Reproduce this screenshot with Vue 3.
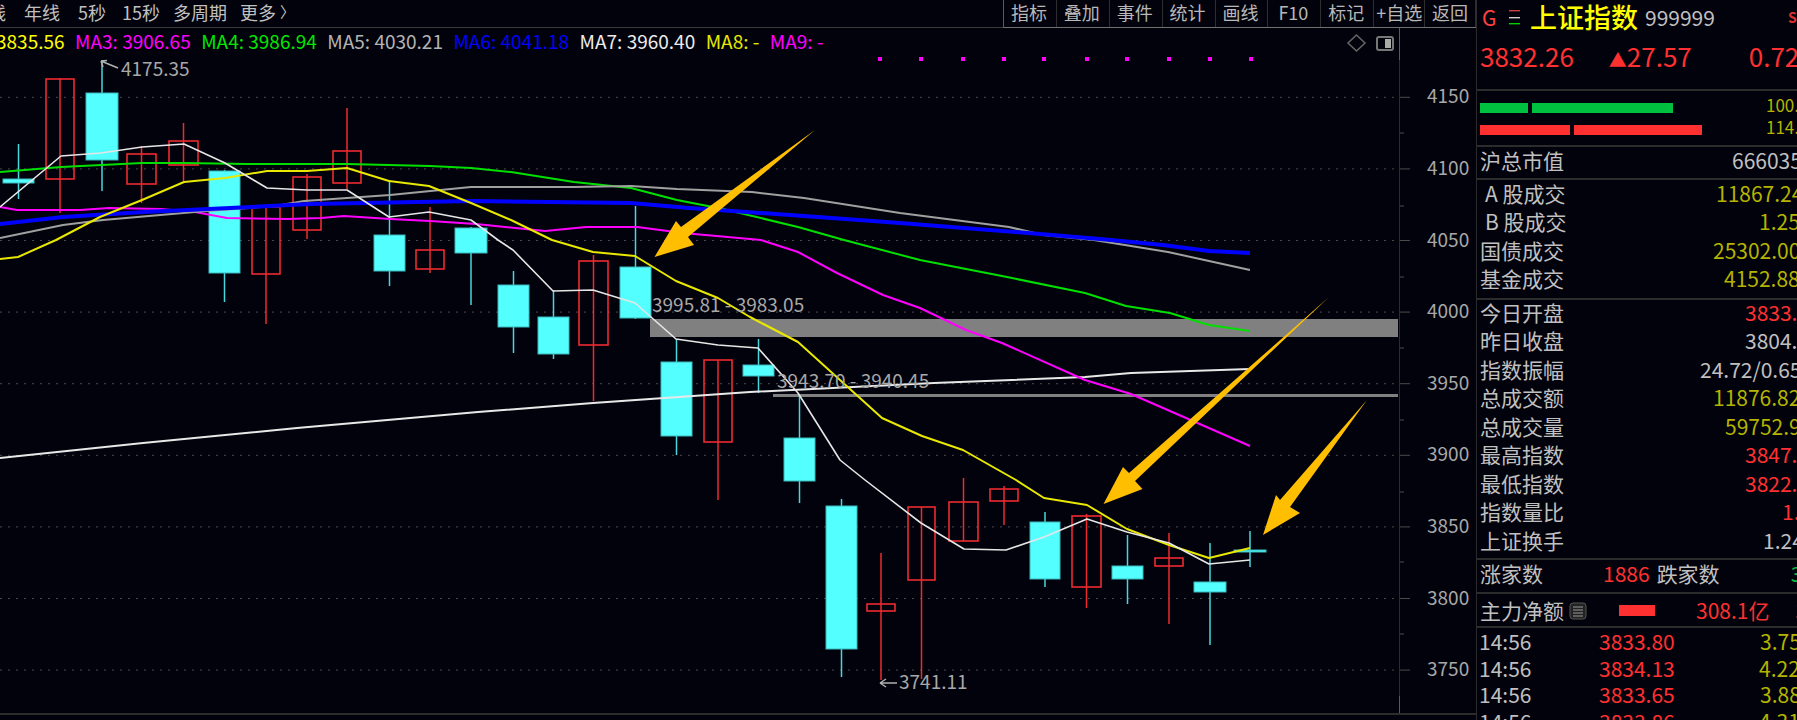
<script setup>
const tabs = [
  { t: '线', c: 'first' }, { t: '年线' }, { t: '5秒', c: 'g5' }, { t: '15秒', c: 'g7' },
  { t: '多周期' }, { t: '更多' }, { t: '〉', c: 'chev' }
]
const tools = ['指标', '叠加', '事件', '统计', '画线', 'F10', '标记', '+自选', '返回']
const legend = [
  { t: '3835.56', c: '#ffff00' }, { t: 'MA3: 3906.65', c: '#ff00ff' }, { t: 'MA4: 3986.94', c: '#00e800' },
  { t: 'MA5: 4030.21', c: '#b4b4b4' }, { t: 'MA6: 4041.18', c: '#0000ff' }, { t: 'MA7: 3960.40', c: '#ececec' },
  { t: 'MA8: -', c: '#e8e800' }, { t: 'MA9: -', c: '#ff00ff' }
]
const status = [
  { t: '58500031.00', c: '#e8e800' }, { t: 'MAVOL1: 21475300.00', c: '#e000e0' }, { t: 'MAVOL2: 32037511.00', c: '#00e000' },
  { t: '换 0.00', c: '#b4b4b4' }, { t: '涨 0.00', c: '#0000ff' }, { t: '补量比 0.00', c: '#a000a0' },
  { t: '补量比 0.00', c: '#a8a800' }, { t: '出仓比 0.00', c: '#e02020' }, { t: '补出量 0.00', c: '#0000e0' }
]

const gridY = [97.3, 168.9, 240.5, 312.1, 383.7, 455.3, 526.9, 598.5, 670.1]
const axis = [4150, 4100, 4050, 4000, 3950, 3900, 3850, 3800, 3750]
const minorY = [133, 206, 277, 348, 420, 492, 562, 634]
const dots = [880, 921, 963, 1004, 1044, 1087, 1127, 1169, 1210, 1251]

const candles = [
  [3, 34, 179, 183, 144, 199, 'c'], [45, 75, 79, 179, 78, 213, 'r'], [86, 118, 93, 160, 60, 191, 'c'],
  [126, 157, 154, 184, 146, 203, 'r'], [168, 199, 141, 165, 123, 181, 'r'], [209, 240, 171, 273, 170, 302, 'c'],
  [251, 281, 207, 274, 206, 324, 'r'], [292, 322, 177, 230, 174, 239, 'r'], [332, 362, 151, 183, 108, 189, 'r'],
  [374, 405, 235, 271, 180, 286, 'c'], [415, 445, 250, 269, 207, 273, 'r'], [455, 487, 228, 253, 227, 305, 'c'],
  [498, 529, 285, 327, 271, 353, 'c'], [538, 569, 317, 354, 290, 359, 'c'], [578, 609, 261, 345, 255, 401, 'r'],
  [620, 651, 267, 318, 206, 319, 'c'], [661, 692, 362, 436, 339, 455, 'c'], [703, 733, 360, 442, 360, 500, 'r'],
  [743, 774, 365, 376, 339, 393, 'c'], [784, 815, 438, 481, 395, 503, 'c'], [826, 857, 506, 649, 499, 677, 'c'],
  [866, 896, 604, 611, 553, 680, 'r'], [907, 936, 507, 580, 507, 679, 'r'], [948, 979, 502, 541, 478, 541, 'r'],
  [989, 1019, 489, 501, 486, 525, 'r'], [1030, 1060, 522, 579, 512, 587, 'c'], [1071, 1102, 516, 587, 514, 608, 'r'],
  [1112, 1143, 566, 579, 535, 604, 'c'], [1154, 1184, 558, 566, 533, 624, 'r'], [1194, 1226, 582, 592, 543, 645, 'c'],
  [1234, 1266, 550, 552, 531, 567, 'c']
].map(([a, b, t, bo, wt, wb, k]) => ({ a, b, t, bo, wt, wb, k, m: (a + b) / 2 }))

const lines = [
  { c: '#e8e8e8', w: 2, p: '0,458 143,443 297,428 478,412 593,403 750,392 934,383 1085,377 1131,373 1250,369' },
  { c: '#ff00ff', w: 2, p: '0,207 17,210 80,210 109,208 161,209 195,212 227,218 287,219 321,218 344,216 390,219 430,221 476,224 545,231 586,227 637,227 683,233 761,240 798,252 837,273 883,295 920,308 966,330 1002,343 1085,380 1131,394 1186,418 1250,446' },
  { c: '#00e000', w: 2, p: '0,172 61,167 142,163 184,163 247,164 347,164 430,166 471,168 511,172 574,182 631,188 677,200 723,209 798,227 844,240 920,260 966,269 1002,276 1085,293 1126,306 1170,313 1209,325 1250,331' },
  { c: '#a0a0a0', w: 2, p: '0,238 63,225 103,220 195,212 275,206 304,201 390,195 471,187 574,187 631,186 677,189 752,192 804,198 900,213 1009,227 1043,235 1094,240 1168,252 1250,270' },
  { c: '#0000ff', w: 4, p: '0,224 63,217 144,212 230,208 310,204 471,201 631,203 689,208 804,216 900,223 1015,232 1100,239 1163,245 1209,251 1250,253' },
  { c: '#e8e800', w: 2, p: '0,259 18,257 56,240 100,217 142,200 184,182 225,178 267,171 307,171 347,168 389,181 429,186 471,203 511,220 552,240 593,252 635,256 676,281 718,298 750,317 798,342 840,380 882,418 922,436 963,450 1016,480 1044,498 1087,505 1127,529 1169,545 1209,558 1250,548' },
  { c: '#e6e6e6', w: 1.6, p: '0,207 61,156 101,153 142,147 184,144 225,163 267,188 307,190 347,190 389,217 429,212 471,220 498,240 513,250 553,291 593,290 635,303 676,339 718,345 758,348 798,393 840,460 865,480 921,523 964,549 1006,550 1044,537 1087,519 1127,532 1169,543 1209,564 1250,560' }
]
const arrows = [
  '815,130 688,237 694,245 654.5,257 676,221 681,227',
  '1329,297 1135,481 1142.5,489 1103.5,504 1123,467 1129,473',
  '1367,400 1290,507 1300,513 1263,535 1276,495 1280,500'
]

const O = '#b4b400', G = '#c0c0c0', R = '#ff3030'
const sec1 = [
  { l: 'A 股成交', v: '11867.24亿', x: 1716, c: O, i: true }, { l: 'B 股成交', v: '1.25亿', x: 1759, c: O, i: true },
  { l: '国债成交', v: '25302.00亿', x: 1713, c: O }, { l: '基金成交', v: '4152.88亿', x: 1724, c: O }
]
const sec2 = [
  { l: '今日开盘', v: '3833.71', x: 1745, c: R }, { l: '昨日收盘', v: '3804.69', x: 1745, c: G },
  { l: '指数振幅', v: '24.72/0.65%', x: 1700, c: G }, { l: '总成交额', v: '11876.82亿', x: 1713, c: O },
  { l: '总成交量', v: '59752.9万', x: 1725, c: O }, { l: '最高指数', v: '3847.01', x: 1745, c: R },
  { l: '最低指数', v: '3822.29', x: 1745, c: R }, { l: '指数量比', v: '1.02', x: 1782, c: R },
  { l: '上证换手', v: '1.24%', x: 1763, c: G }
]
const ticks = [
  { p: '3833.80', v: '3.75亿', x: 1761 }, { p: '3834.13', v: '4.22亿', x: 1760 },
  { p: '3833.65', v: '3.88亿', x: 1761 }, { p: '3833.86', v: '4.31亿', x: 1760 }
]
const off = (x) => ({ marginLeft: x - 1570 + 'px' })
</script>

<template>
  <div class="app">
    <div class="main">
      <header class="topbar">
        <nav class="tabs">
          <span v-for="t in tabs" :key="t.t" :class="t.c">{{ t.t }}</span>
        </nav>
        <div class="tools">
          <span v-for="t in tools" :key="t">{{ t }}</span>
        </div>
      </header>

      <section class="chart">
        <div class="legend">
          <span v-for="l in legend" :key="l.t" :style="{ color: l.c }">{{ l.t }}</span>
        </div>
        <svg class="plot" width="1476" height="685" viewBox="0 28 1476 685">
          <line v-for="y in gridY" :key="y" class="grid" x1="0" x2="1398" :y1="y" :y2="y" />
          <line x1="1399.5" x2="1399.5" y1="60" y2="696" class="axis" />
          <line x1="1399.5" x2="1399.5" y1="28" y2="60" class="axis-hi" />
          <line x1="1399.5" x2="1399.5" y1="696" y2="713" class="axis-hi" />
          <line v-for="y in gridY" :key="'m' + y" class="tick" x1="1400" x2="1410" :y1="y" :y2="y" />
          <line v-for="y in minorY" :key="'n' + y" class="tick" x1="1400" x2="1404" :y1="y" :y2="y" />
          <text v-for="(a, i) in axis" :key="a" class="ax-label" x="1427" :y="gridY[i] + 6">{{ a }}</text>

          <rect x="650" y="319" width="748" height="18" class="band" />
          <rect x="773" y="394" width="625" height="3" class="band" />

          <g v-for="c in candles" :key="c.a">
            <line :x1="c.m" :x2="c.m" :y1="c.wt" :y2="c.wb" :class="c.k === 'c' ? 'wick-c' : 'wick-r'" />
            <rect v-if="c.k === 'c'" :x="c.a" :y="c.t" :width="c.b - c.a" :height="c.bo - c.t" class="body-c" />
            <rect v-else :x="c.a + 1" :y="c.t" :width="c.b - c.a - 2" :height="c.bo - c.t" class="body-r" />
          </g>

          <polyline v-for="l in lines" :key="l.c + l.w" :points="l.p" :stroke="l.c" :stroke-width="l.w" class="ma" />

          <rect v-for="x in dots" :key="x" :x="x - 2" y="57" width="4" height="4" class="dot" />

          <text class="label" x="652" y="312">3995.81 - 3983.05</text>
          <text class="label" x="777" y="388">3943.70 - 3940.45</text>
          <text class="label" x="121" y="76">4175.35</text>
          <text class="label" x="899" y="689">3741.11</text>
          <path d="M118 68 L101 61 M101 61 L107 60.5 M101 61 L103 67" class="pointer" />
          <path d="M897 683 L880 683 M880 683 L886 679 M880 683 L886 687" class="pointer" />

          <polygon v-for="a in arrows" :key="a" :points="a" class="arrow" />

          <polygon points="1356.5,35 1365,43 1356.5,51 1348,43" class="diamond" />
          <rect x="1377" y="37" width="16" height="13" rx="2" class="frame" />
          <rect x="1385" y="39" width="6" height="9" class="frame-in" />
        </svg>
      </section>

      <footer class="status">
        <span v-for="s in status" :key="s.t + s.c" :style="{ color: s.c }">{{ s.t }}</span>
      </footer>
    </div>

    <aside class="panel">
      <div class="title">
        <span class="g">G</span>
        <svg class="menu" width="12" height="16" viewBox="0 0 12 16">
          <rect y="0" width="11" height="1.4" fill="#c84040" />
          <rect y="7" width="11" height="1.4" fill="#d0d0d0" />
          <rect y="13" width="11" height="1.4" fill="#00d000" />
        </svg>
        <span class="name">上证指数</span>
        <span class="code">999999</span>
        <span class="so">S0</span>
      </div>
      <div class="quote">
        <span class="price">3832.26</span>
        <span class="chg"><i class="up">▲</i>27.57</span>
        <span class="pct">0.72%</span>
      </div>

      <div class="bars sep">
        <div class="bar-row">
          <div class="track"><b class="gr" style="width:48px"></b><b class="gr" style="width:141px"></b></div>
          <span class="olive small">100.21亿</span>
        </div>
        <div class="bar-row">
          <div class="track"><b class="rd" style="width:90px"></b><b class="rd" style="width:128px"></b></div>
          <span class="olive small">114.55亿</span>
        </div>
      </div>

      <div class="row cap sep">
        <span class="lbl">沪总市值</span>
        <span :style="off(1732)">666035.12亿</span>
      </div>

      <div class="list sep">
        <div v-for="r in sec1" :key="r.l" class="row">
          <span class="lbl" :class="{ ind: r.i }">{{ r.l }}</span>
          <span :style="{ ...off(r.x), color: r.c }">{{ r.v }}</span>
        </div>
      </div>

      <div class="list second sep">
        <div v-for="r in sec2" :key="r.l" class="row">
          <span class="lbl">{{ r.l }}</span>
          <span :style="{ ...off(r.x), color: r.c }">{{ r.v }}</span>
        </div>
      </div>

      <div class="row single sep">
        <span class="lbl three">涨家数</span>
        <span class="red n1886">1886</span>
        <span class="lbl three fall">跌家数</span>
        <span class="green">316</span>
      </div>

      <div class="row single flow sep">
        <span class="lbl">主力净额</span>
        <svg class="list-icon" width="18" height="18" viewBox="0 0 18 18">
          <rect x="1" y="1" width="16" height="16" rx="3" fill="#222" stroke="#555" />
          <path d="M4 5h10M4 8h10M4 11h10M4 14h10" stroke="#999" stroke-width="1" />
        </svg>
        <b class="flow-bar"></b>
        <span class="red net">308.1亿</span>
        <span class="red">308</span>
      </div>

      <div class="tick-list">
        <div v-for="t in ticks" :key="t.p" class="tick-row">
          <span class="tm">14:56</span>
          <span class="red tp">{{ t.p }}</span>
          <span class="olive" :style="{ marginLeft: t.x - 1660 + 'px' }">{{ t.v }}</span>
        </div>
      </div>
    </aside>
  </div>
</template>

<style>
html, body { margin: 0; background: #02020c; }
</style>

<style scoped>
.app {
  display: flex;
  width: 1797px;
  height: 720px;
  overflow: hidden;
  background: #02020c;
  color: #c0c0c0;
  font-family: "Noto Sans CJK SC", "Noto Sans", sans-serif;
}
.main { width: 1476px; flex: none; display: flex; flex-direction: column; }

.topbar {
  height: 27px;
  flex: none;
  display: flex;
  justify-content: space-between;
  border-bottom: 1px solid #3a3a3a;
  font-size: 18px;
  line-height: 24px;
  position: relative;
}
.tabs { display: flex; gap: 13px; margin-left: -12px; white-space: nowrap; }
.tabs .first { margin-right: 5px; }
.tabs .g5 { margin-left: 5px; }
.tabs .g7 { margin-left: 3px; }
.tabs .chev { margin-left: -9px; font-size: 15px; }
.tools { display: flex; width: 473px; border-left: 1px solid #5a5a5a; margin-bottom: -1px; border-bottom: 1px solid #707070; box-sizing: border-box; height: 28px; }
.tools span {
  flex: 1 1 0;
  text-align: center;
  border-right: 1px solid #2e2e2e;
  white-space: nowrap;
  color: #b8b8b8;
}
.tools span:nth-child(-n+7) { padding-right: 2px; }
.chart { position: relative; height: 685px; flex: none; }
.legend {
  position: absolute;
  left: -4px;
  top: 0;
  display: flex;
  gap: 10.5px;
  font-size: 19px;
  line-height: 26px;
  white-space: nowrap;
}
.plot { display: block; }
.grid { stroke: #4a4a4a; stroke-width: 1; stroke-dasharray: 2 6; }
.axis { stroke: #2c2c2c; stroke-width: 1; }
.axis-hi { stroke: #5a5a5a; stroke-width: 1; }
.tick { stroke: #4a4a4a; stroke-width: 1; }
.ax-label { fill: #a8a8a8; font-size: 19px; }
.band { fill: #808080; }
.wick-c { stroke: #48d8dc; stroke-width: 1.5; }
.wick-r { stroke: #ee2a2e; stroke-width: 1.5; }
.body-c { fill: #54ffff; stroke: #3ab8bc; stroke-width: 1; }
.body-r { fill: none; stroke: #ee2a30; stroke-width: 1.6; }
.ma { fill: none; stroke-linejoin: round; }
.dot { fill: #ff00ff; }
.label { fill: #a8a8a8; font-size: 19px; }
.pointer { fill: none; stroke: #b0b0b0; stroke-width: 1.5; }
.arrow { fill: #ffbe00; }
.diamond { fill: none; stroke: #666; stroke-width: 1.5; }
.frame { fill: none; stroke: #777; stroke-width: 2; }
.frame-in { fill: #aaa; }

.status {
  flex: none;
  border-top: 2px solid #2c2c2c;
  display: flex;
  gap: 10px;
  margin-left: -2px;
  font-size: 18px;
  line-height: 26px;
  white-space: nowrap;
}

.panel {
  flex: 1;
  border-left: 1px solid #2c2c2c;
  font-size: 21px;
  line-height: 28px;
  white-space: nowrap;
  overflow: hidden;
  min-width: 0;
}
.title { height: 34px; display: flex; align-items: center; position: relative; padding-left: 5px; }
.g { color: #ff4040; width: 27px; flex: none; line-height: 30px; }
.menu { flex: none; margin-top: 2px; }
.name { color: #ffff00; font-size: 27px; font-weight: 500; margin-left: 9px; line-height: 32px; }
.code { margin-left: 7px; color: #c0c0c0; line-height: 30px; }
.so { position: absolute; left: 311px; top: 8px; color: #e03030; font-size: 14px; font-weight: 700; line-height: 18px; }
.quote { height: 55px; display: flex; align-items: flex-start; color: #ff3030; font-size: 26px; line-height: 44px; padding-left: 3px; }
.chg { margin-left: 35px; }
.up { font-style: normal; font-size: 18px; }
.pct { margin-left: 57px; }
.sep { border-bottom: 2px solid #2c2c2c; }
.quote { border-bottom: 2px solid #2c2c2c; }

.bars { padding: 6px 0 0 3px; box-sizing: border-box; height: 56px; }
.bar-row { height: 22px; display: flex; line-height: 16px; }
.track { width: 286px; flex: none; display: flex; gap: 4px; align-items: center; height: 22px; }
.gr { display: block; height: 10px; background: #00c040; }
.rd { display: block; height: 10px; background: #ff3030; }
.olive { color: #b4b400; }
.small { font-size: 17px; }
.red { color: #ff3030; }
.green { color: #00c040; }

.row { display: flex; height: 28.5px; line-height: 24.5px; padding-left: 3px; }
.lbl { flex: none; width: 90px; color: #c0c0c0; }
.ind { padding-left: 5px; box-sizing: border-box; }
.cap { height: 31px; line-height: 26px; }
.list { padding: 1px 0 3px; }
.second { padding: 0 0 2px; }
.list .row { height: 28.4px; line-height: 24.4px; }
.second .row { height: 28.5px; line-height: 24.5px; }

.single { height: 32px; line-height: 26px; }
.three { width: 63px; }
.n1886 { margin-left: 60px; }
.fall { margin-left: 7px; }
.green { margin-left: 71px; }
.flow { align-items: center; line-height: 28px; }
.list-icon { margin-left: -1px; flex: none; margin-top: 1px; }
.flow-bar { display: block; width: 36px; height: 11px; background: #ff3030; margin-left: 32px; flex: none; }
.net { margin-left: 41px; }
.flow .red:last-child { margin-left: 26px; }

.tick-list { padding-top: 0; }
.tick-row { display: flex; height: 26.7px; line-height: 26.7px; padding-left: 2px; }
.tm { width: 120px; flex: none; color: #c0c0c0; }
.tp { width: 60px; }
</style>
